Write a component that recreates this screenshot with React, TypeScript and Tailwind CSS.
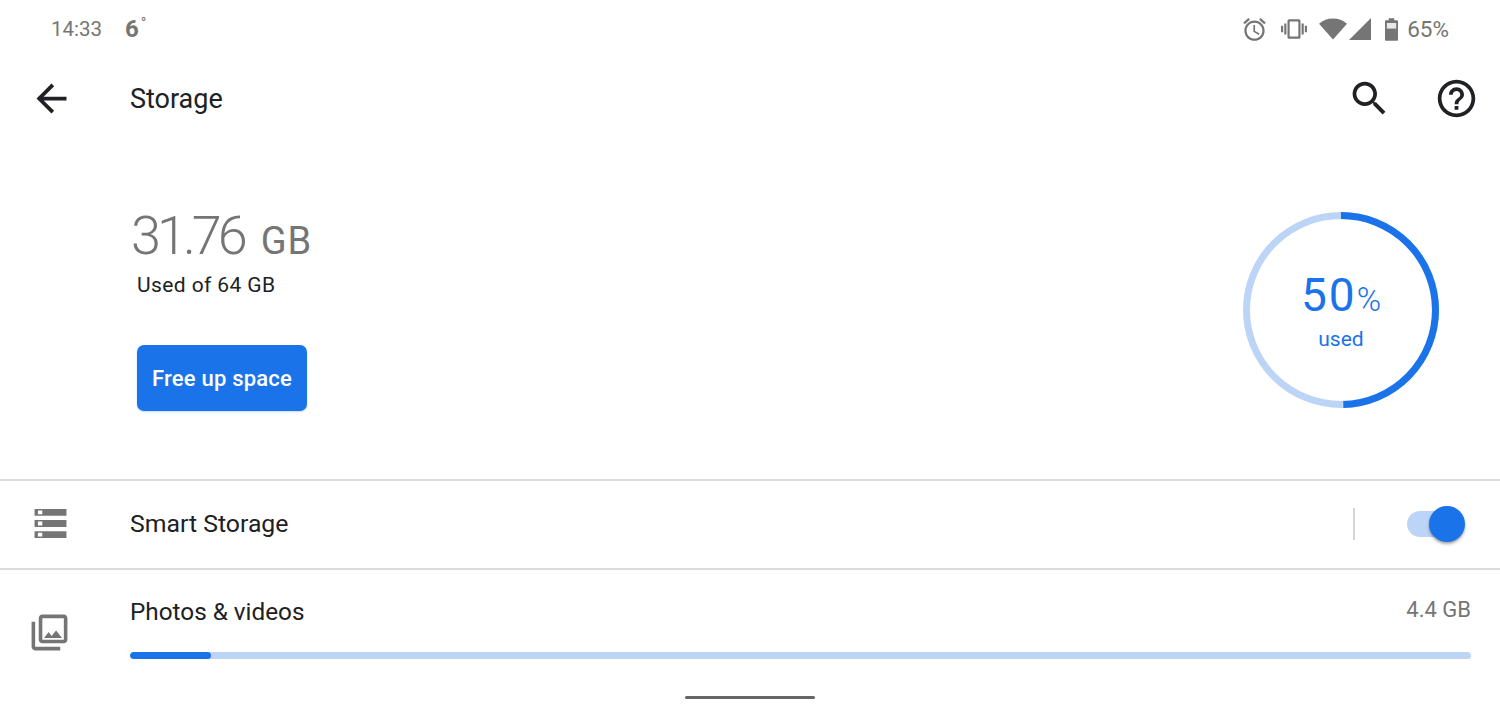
import { ReactNode } from 'react'

function Icon({ d, className, box = '0 0 24 24' }: { d: string; className: string; box?: string }) {
    return (
        <svg viewBox={box} className={className} fill="currentColor">
            <path d={d} />
        </svg>
    )
}

const icons = {
    alarm: 'M22 5.72l-4.6-3.86-1.29 1.53 4.6 3.86L22 5.72zM7.88 3.39L6.6 1.86 2 5.71l1.29 1.53 4.59-3.85zM12.5 8H11v6l4.75 2.85.75-1.23-4-2.37V8zM12 4c-4.97 0-9 4.03-9 9s4.02 9 9 9c4.97 0 9-4.03 9-9s-4.03-9-9-9zm0 16c-3.87 0-7-3.13-7-7s3.13-7 7-7 7 3.13 7 7-3.13 7-7 7z',
    vibrate: 'M0 15h2V9H0v6zm3 2h2V7H3v10zm19-8v6h2V9h-2zm-3 8h2V7h-2v10zM16.5 3h-9C6.67 3 6 3.67 6 4.5v15c0 .83.67 1.5 1.5 1.5h9c.83 0 1.5-.67 1.5-1.5v-15c0-.83-.67-1.5-1.5-1.5zM16 19H8V5h8v14z',
    wifi: 'M12 21L0 7.5C3.4 4.6 7.4 3 12 3s8.6 1.6 12 4.5L12 21z',
    signal: 'M2 22h20V2L2 22z',
    back: 'M20 11H7.83l5.59-5.59L12 4l-8 8 8 8 1.41-1.41L7.83 13H20v-2z',
    search: 'M15.5 14h-.79l-.28-.27C15.41 12.59 16 11.11 16 9.5 16 5.91 13.09 3 9.5 3S3 5.91 3 9.5 5.91 16 9.5 16c1.61 0 3.09-.59 4.23-1.57l.27.28v.79l5 4.99L20.49 19l-4.99-5zm-6 0C7.01 14 5 11.99 5 9.5S7.01 5 9.5 5 14 7.01 14 9.5 11.99 14 9.5 14z',
    help: 'M11 18h2v-2h-2v2zm1-16C6.48 2 2 6.48 2 12s4.48 10 10 10 10-4.48 10-10S17.52 2 12 2zm0 18c-4.41 0-8-3.59-8-8s3.59-8 8-8 8 3.59 8 8-3.59 8-8 8zm0-14c-2.21 0-4 1.79-4 4h2c0-1.1.9-2 2-2s2 .9 2 2c0 2-3 1.75-3 5h2c0-2.25 3-2.5 3-5 0-2.21-1.79-4-4-4z',
    photos: 'M20 4v12H8V4h12m0-2H8c-1.1 0-2 .9-2 2v12c0 1.1.9 2 2 2h12c1.1 0 2-.9 2-2V4c0-1.1-.9-2-2-2zm-8.5 9.67l1.69 2.26 2.48-3.1L19 15H9zM2 6v14c0 1.1.9 2 2 2h14v-2H4V6H2z',
}

function StatusBar() {
    return (
        <div className="h-[58px] flex items-center justify-between pl-[51px] pr-[51px] text-[#757575]">
            <div className="flex items-center">
                <span className="text-[20.5px] leading-none w-[74px]">14:33</span>
                <span className="text-[24px] leading-none font-bold">6</span>
                <span className="text-[15px] leading-none self-start ml-[2px] -mt-[1px]">°</span>
            </div>
            <div className="flex items-center">
                <Icon d={icons.alarm} className="w-[27px] h-[27px]" />
                <Icon d={icons.vibrate} className="w-[26px] h-[26px] ml-[13px]" />
                <Icon d={icons.wifi} box="0 3 24 18" className="w-[28px] h-[22px] ml-[12px]" />
                <Icon d={icons.signal} box="2 2 20 20" className="w-[22px] h-[22px] ml-[2px]" />
                <svg viewBox="0 0 14 24" className="w-[13px] h-[23px] ml-[14px]">
                    <path d="M4 0h6v2h3a1 1 0 0 1 1 1v20a1 1 0 0 1-1 1H1a1 1 0 0 1-1-1V3a1 1 0 0 1 1-1h3z" fill="#757575" />
                    <rect x="2" y="5" width="10" height="6" fill="#e8e8e8" />
                </svg>
                <span className="text-[22.5px] leading-none ml-[9px]">65%</span>
            </div>
        </div>
    )
}

function Toolbar() {
    return (
        <div className="h-[80px] flex items-center text-[#202124]">
            <Icon d={icons.back} className="w-[45px] h-[45px] ml-[29px]" />
            <span className="text-[27px] leading-none ml-[56px] mt-[2px]">Storage</span>
            <div className="flex-1" />
            <Icon d={icons.search} className="w-[45px] h-[45px]" />
            <Icon d={icons.help} className="w-[45px] h-[45px] ml-[42px] mr-[21px]" />
        </div>
    )
}

function UsageRing() {
    return (
        <div className="relative w-[196px] h-[196px]">
            <svg viewBox="0 0 196 196" className="w-full h-full -rotate-90">
                <circle cx="98" cy="98" r="94.5" fill="none" stroke="#bcd5f7" strokeWidth="7" />
                <circle cx="98" cy="98" r="94.5" fill="none" stroke="#1a73e8" strokeWidth="7" pathLength="100" strokeDasharray="49.6 100" />
            </svg>
            <div className="absolute inset-0 flex flex-col items-center justify-center text-[#1a73e8]">
                <div className="flex items-baseline leading-none mt-[2px]">
                    <span className="text-[46px] leading-none tracking-[2px]">50</span>
                    <span className="text-[33px] leading-none font-light">%</span>
                </div>
                <span className="text-[21px] leading-none mt-[11px]">used</span>
            </div>
        </div>
    )
}

function Row({ icon, className, children }: { icon: ReactNode; className: string; children: ReactNode }) {
    return (
        <div className={`flex border-t-2 border-[#dcdcdc] ${className}`}>
            <div className="w-[130px] shrink-0 flex justify-start pl-[30px]">{icon}</div>
            {children}
        </div>
    )
}

export default function App() {
    return (
        <div className="w-[1500px] h-[711px] bg-white overflow-hidden flex flex-col font-['Roboto',sans-serif]">
            <StatusBar />
            <Toolbar />

            {/* Usage summary */}
            <div className="h-[341px] flex justify-between pl-[131px] pr-[61px]">
                <div className="pt-[71px]">
                    <div className="flex items-baseline text-[#757575] leading-none">
                        <span className="text-[54px] leading-none tracking-[-4px] font-light">31.76</span>
                        <span className="text-[38px] leading-none ml-[17px] tracking-[1px]">GB</span>
                    </div>
                    <div className="text-[21px] leading-none text-[#202124] ml-[6px] mt-[12px] tracking-[0.4px]">Used of 64 GB</div>
                    <button className="mt-[49px] ml-[6px] w-[170px] h-[66px] rounded-[7px] bg-[#1a73e8] text-white text-[22px] font-medium tracking-[0.2px] flex items-center justify-center shadow-[0_1px_2px_rgba(26,115,232,0.25)]">
                        Free up space
                    </button>
                </div>
                <div className="pt-[74px]">
                    <UsageRing />
                </div>
            </div>

            <Row
                className="h-[89px] items-center"
                icon={
                    <svg viewBox="0 0 33 30" className="w-[33px] h-[29px] ml-[4px] -mt-[2px]">
                        <path d="M0 0h33v7H0zM0 11.5h33v7H0zM0 23h33v7H0z" fill="#757575" />
                        <path d="M3.5 1.5h4.5v4H3.5zM3.5 13h4.5v4H3.5zM3.5 24.5h4.5v4H3.5z" fill="#fff" />
                    </svg>
                }
            >
                <span className="text-[24.8px] leading-none text-[#202124]">Smart Storage</span>
                <div className="flex-1" />
                <div className="w-[2px] h-[32px] bg-[#d5d5d5] -mt-[1px]" />
                <div className="relative w-[43px] h-[26px] rounded-full bg-[#bcd5f7] ml-[52px] mr-[50px] -mt-[2px]">
                    <div className="absolute -right-[15px] -top-[5px] w-[36px] h-[36px] rounded-full bg-[#1a73e8] shadow-[0_2px_3px_rgba(0,0,0,0.35)]" />
                </div>
            </Row>

            <Row
                className="flex-1"
                icon={<Icon d={icons.photos} className="w-[43px] h-[43px] -ml-[2px] mt-[41px] text-[#757575]" />}
            >
                <div className="flex-1 pr-[29px] pt-[30px]">
                    <div className="flex justify-between items-start">
                        <span className="text-[24.3px] leading-none text-[#202124]">Photos &amp; videos</span>
                        <span className="text-[22px] leading-none text-[#757575] -mt-[1px]">4.4 GB</span>
                    </div>
                    <div className="h-[7px] rounded-full bg-[#bcd5f7] mt-[28px] overflow-hidden">
                        <div className="h-full w-[81px] rounded-full bg-[#1a73e8]" />
                    </div>
                    <div className="w-[130px] h-[3px] rounded-full bg-[#666666] mt-[37px] ml-[555px]" />
                </div>
            </Row>
        </div>
    )
}
